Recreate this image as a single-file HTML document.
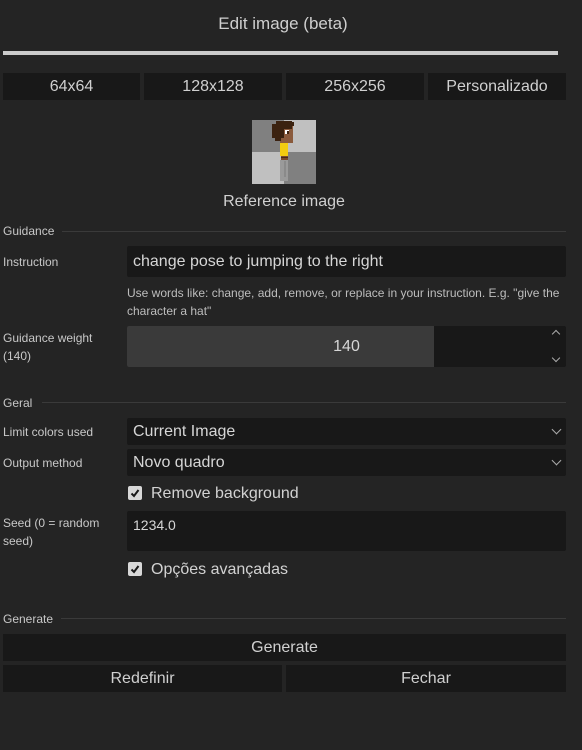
<!DOCTYPE html>
<html><head><meta charset="utf-8"><style>
*{box-sizing:border-box;margin:0;padding:0}
body{width:582px;height:750px;background:#242424;font-family:"Liberation Sans",sans-serif;color:#d2d2d2;position:relative;overflow:hidden}
.a{position:absolute}
.btn{position:absolute;background:#181818;color:#d0d0d0;font-size:16px;display:flex;align-items:center;justify-content:center;padding-top:1px}
.lbl{position:absolute;font-size:12px;color:#c8c8c8;line-height:18px}
.sec{position:absolute;font-size:12px;color:#c8c8c8}
.line{position:absolute;height:1px;background:#3a3a3a}
.inp{position:absolute;background:#181818;border-radius:2px;font-size:16px;color:#d6d6d6;padding-left:6px;padding-top:1px;display:flex;align-items:center}
.cb{position:absolute;width:14px;height:14px;background:#d8d8d8;border-radius:2px}
.chev{position:absolute;right:6px;width:7px;height:7px;border-right:1.5px solid #aaa;border-bottom:1.5px solid #aaa;transform:rotate(45deg)}
</style></head><body>
<div class="a" style="left:0;top:14px;width:566px;text-align:center;font-size:17px;color:#cfcfcf">Edit image (beta)</div>
<div class="a" style="left:3px;top:51px;width:555px;height:4px;background:#cccccc"></div>
<div class="btn" style="left:3px;top:73px;width:137px;height:27px">64x64</div>
<div class="btn" style="left:144px;top:73px;width:138px;height:27px">128x128</div>
<div class="btn" style="left:286px;top:73px;width:138px;height:27px">256x256</div>
<div class="btn" style="left:428px;top:73px;width:138px;height:27px">Personalizado</div>
<svg class="a" style="left:252px;top:120px" width="64" height="64" viewBox="0 0 64 64" shape-rendering="crispEdges">
<rect width="32" height="32" fill="#808080"/><rect x="32" width="32" height="32" fill="#c0c0c0"/>
<rect y="32" width="32" height="32" fill="#c0c0c0"/><rect x="32" y="32" width="32" height="32" fill="#808080"/>
<rect x="28" y="6" width="13" height="17" fill="#8a5a3c"/>
<rect x="20" y="4" width="12" height="14" fill="#3b2210"/><rect x="24" y="1" width="16" height="8" fill="#3b2210"/><rect x="40" y="2" width="2" height="4" fill="#3b2210"/>
<rect x="23" y="15" width="6" height="6" fill="#3b2210"/>
<rect x="33" y="10" width="4" height="4" fill="#fff"/><rect x="35" y="11" width="2" height="3" fill="#3b2210"/>
<rect x="28" y="23" width="8" height="13" fill="#f2cc10"/>
<rect x="29" y="36" width="7" height="4" fill="#7a4a2a"/><rect x="29" y="37" width="7" height="1" fill="#4a2a14"/>
<rect x="28" y="40" width="8" height="21" fill="#9a9a9a"/><rect x="32" y="41" width="2" height="16" fill="#8a8a8a"/>
</svg>
<div class="a" style="left:0;top:193px;width:568px;text-align:center;font-size:16px;color:#d0d0d0">Reference image</div>
<div class="sec" style="left:3px;top:224px">Guidance</div><div class="line" style="left:62px;right:16px;top:231px"></div>
<div class="lbl" style="left:3px;top:253px">Instruction</div>
<div class="inp" style="left:127px;top:246px;width:439px;height:31px">change pose to jumping to the right</div>
<div class="lbl" style="left:127px;top:284px;width:440px;color:#bdbdbd">Use words like: change, add, remove, or replace in your instruction. E.g. "give the character a hat"</div>
<div class="lbl" style="left:3px;top:329px">Guidance weight<br>(140)</div>
<div class="a" style="left:127px;top:326px;width:439px;height:41px;background:#181818;border-radius:2px"></div>
<div class="a" style="left:127px;top:326px;width:307px;height:41px;background:#3a3a3a;border-radius:2px 0 0 2px"></div>
<div class="a" style="left:127px;top:338px;width:439px;text-align:center;font-size:16px;color:#d6d6d6">140</div>
<div class="a" style="left:553px;top:331px;width:6px;height:6px;border-left:1.5px solid #aaa;border-top:1.5px solid #aaa;transform:rotate(45deg)"></div>
<div class="a" style="left:553px;top:355px;width:6px;height:6px;border-right:1.5px solid #aaa;border-bottom:1.5px solid #aaa;transform:rotate(45deg)"></div>
<div class="sec" style="left:3px;top:396px">Geral</div><div class="line" style="left:42px;right:16px;top:402px"></div>
<div class="lbl" style="left:3px;top:423px">Limit colors used</div>
<div class="inp" style="left:127px;top:418px;width:439px;height:27px">Current Image<div class="chev" style="top:8px"></div></div>
<div class="lbl" style="left:3px;top:454px">Output method</div>
<div class="inp" style="left:127px;top:449px;width:439px;height:27px">Novo quadro<div class="chev" style="top:8px"></div></div>
<div class="cb" style="left:128px;top:486px"></div>
<svg class="a" style="left:128px;top:486px" width="14" height="14"><path d="M3.5 7.5 L6 10 L10.5 4" stroke="#181818" stroke-width="2" fill="none"/></svg>
<div class="a" style="left:151px;top:485px;font-size:16px">Remove background</div>
<div class="lbl" style="left:3px;top:514px">Seed (0 = random<br>seed)</div>
<div class="inp" style="left:127px;top:511px;width:439px;height:40px;align-items:flex-start;padding-top:6px;font-size:14px">1234.0</div>
<div class="cb" style="left:128px;top:562px"></div>
<svg class="a" style="left:128px;top:562px" width="14" height="14"><path d="M3.5 7.5 L6 10 L10.5 4" stroke="#181818" stroke-width="2" fill="none"/></svg>
<div class="a" style="left:151px;top:561px;font-size:16px">Opções avançadas</div>
<div class="sec" style="left:3px;top:612px">Generate</div><div class="line" style="left:61px;right:16px;top:618px"></div>
<div class="btn" style="left:3px;top:634px;width:563px;height:27px">Generate</div>
<div class="btn" style="left:3px;top:665px;width:279px;height:27px">Redefinir</div>
<div class="btn" style="left:286px;top:665px;width:280px;height:27px">Fechar</div>
</body></html>
